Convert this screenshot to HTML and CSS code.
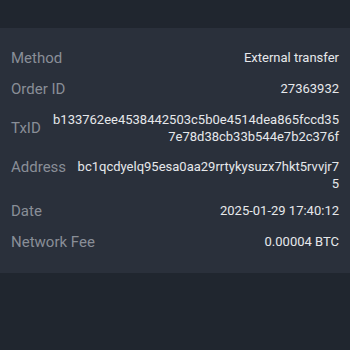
FILE: index.html
```html
<!DOCTYPE html>
<html>
<head>
<meta charset="utf-8">
<link rel="stylesheet" href="styles.css">
</head>
<body>
<div class="top"></div>
<section class="panel">
  <div class="row"><span class="label">Method</span><span class="value">External transfer</span></div>
  <div class="row"><span class="label">Order ID</span><span class="value">27363932</span></div>
  <div class="row"><span class="label">TxID</span><span class="value">b133762ee4538442503c5b0e4514dea865fccd357e78d38cb33b544e7b2c376f</span></div>
  <div class="row row-top row-tight"><span class="label">Address</span><span class="value">bc1qcdyelq95esa0aa29rrtykysuzx7hkt5rvvjr75</span></div>
  <div class="row"><span class="label">Date</span><span class="value">2025-01-29 17:40:12</span></div>
  <div class="row"><span class="label">Network Fee</span><span class="value">0.00004 BTC</span></div>
</section>
</body>
</html>
```
FILE: styles.css
```css
html, body {
  margin: 0;
  padding: 0;
  background: #20262f;
  height: 100%;
}
body {
  font-family: Roboto, "Liberation Sans", sans-serif;
}
.top {
  height: 28px;
}
.panel {
  background: #2a303b;
  padding: 15px 11px;
  display: flex;
  flex-direction: column;
}
.row {
  display: flex;
  align-items: center;
  justify-content: space-between;
  gap: 9px;
  padding: 7px 0;
}
.row-top {
  align-items: flex-start;
}
.row-tight {
  padding-bottom: 4px;
}
.label {
  flex: none;
  font-size: 15px;
  line-height: 17px;
  color: #898e97;
}
.row-top .label {
  line-height: 16.5px;
}
.value {
  flex: 1;
  min-width: 0;
  text-align: right;
  font-size: 13px;
  line-height: 16.5px;
  color: #e6e8eb;
  word-break: break-all;
}
```
